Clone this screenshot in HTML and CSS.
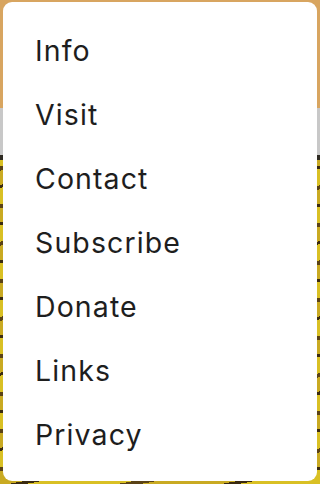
FILE: index.html
```html
<!DOCTYPE html>
<html>
<head>
<meta charset="utf-8">
<link rel="stylesheet" href="styles.css">
</head>
<body>
<div class="backdrop">
  <nav class="menu">
    <ul class="menu-list">
      <li class="menu-item">Info</li>
      <li class="menu-item">Visit</li>
      <li class="menu-item">Contact</li>
      <li class="menu-item">Subscribe</li>
      <li class="menu-item">Donate</li>
      <li class="menu-item">Links</li>
      <li class="menu-item">Privacy</li>
    </ul>
  </nav>
</div>
</body>
</html>
```
FILE: styles.css
```css
html, body {
  margin: 0;
  padding: 0;
}
body {
  width: 320px;
  height: 484px;
  overflow: hidden;
}
.backdrop {
  width: 320px;
  height: 484px;
  box-sizing: border-box;
  padding: 2px 3px 3px 3px;
  background:
    linear-gradient(to bottom,
      #d8a560 0px, #d8a560 108px,
      #c8c8c8 108px, #c8c8c8 155px,
      #2e2a22 155px, #2e2a22 160px,
      transparent 160px),
    repeating-linear-gradient(170deg, #d9c024 0px, #d9c024 16px, #5a4216 16px, #5a4216 20px, #c9aa22 20px, #c9aa22 34px, #3a2a10 34px, #3a2a10 37px);
}
.menu {
  height: 100%;
  box-sizing: border-box;
  background: #ffffff;
  border-radius: 9px;
  padding: 17px 0 15px 0;
}
.menu-list {
  list-style: none;
  margin: 0;
  padding: 0;
  display: flex;
  flex-direction: column;
}
.menu-item {
  height: 64px;
  line-height: 64px;
  padding-left: 32px;
  font-family: Inter, "Noto Sans", sans-serif;
  font-size: 28.5px;
  color: #1e1e1e;
  letter-spacing: 1.1px;
}
```
